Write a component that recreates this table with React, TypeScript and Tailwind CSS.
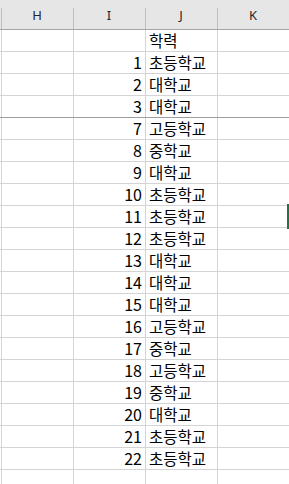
import React from "react";

type Row = { n: number | null; v: string; heavy?: boolean; sel?: boolean };

const rows: Row[] = [
  { n: null, v: "학력" },
  { n: 1, v: "초등학교" },
  { n: 2, v: "대학교" },
  { n: 3, v: "대학교", heavy: true },
  { n: 7, v: "고등학교" },
  { n: 8, v: "중학교" },
  { n: 9, v: "대학교" },
  { n: 10, v: "초등학교" },
  { n: 11, v: "초등학교", sel: true },
  { n: 12, v: "초등학교" },
  { n: 13, v: "대학교" },
  { n: 14, v: "대학교" },
  { n: 15, v: "대학교" },
  { n: 16, v: "고등학교" },
  { n: 17, v: "중학교" },
  { n: 18, v: "고등학교" },
  { n: 19, v: "중학교" },
  { n: 20, v: "대학교" },
  { n: 21, v: "초등학교" },
  { n: 22, v: "초등학교" },
  { n: null, v: "" },
];

const cellFont = {
  fontFamily: '"Noto Sans CJK KR", "Noto Sans", sans-serif',
};

export default function App() {
  return (
    <div className="w-[289px] h-[484px] overflow-hidden bg-white select-none">
      {/* column header strip */}
      <div className="flex h-[30px] bg-[#e6e6e6] border-b border-[#a6a6a6]">
        <div className="w-px" />
        {["H", "I", "J", "K"].map((c) => (
          <div key={c} className="relative w-[72px] flex items-start justify-center pt-[7px]">
            <div className="absolute left-0 top-[8px] bottom-0 w-px bg-[#bdbdbd]" />
            <span className="text-[13px] leading-[16px] text-[#262626]" style={{ fontFamily: '"Noto Sans", sans-serif' }}>
              {c}
            </span>
          </div>
        ))}
      </div>

      {/* body rows */}
      {rows.map((r, i) => (
        <div
          key={i}
          className={`flex h-[22px] border-b ${r.heavy ? "border-[#9e9e9e]" : "border-[#d4d4d4]"}`}
        >
          <div className="w-px" />
          <div className="w-[72px] border-l border-[#d4d4d4]" />
          <div
            className="w-[72px] border-l border-[#d4d4d4] flex items-center justify-end pr-[3px] text-[16px] leading-[21px] text-black"
            style={cellFont}
          >
            {r.n ?? ""}
          </div>
          <div
            className="w-[72px] border-l border-[#d4d4d4] flex items-center pl-[3px] text-[15.5px] leading-[21px] text-black whitespace-nowrap"
            style={cellFont}
          >
            {r.v}
          </div>
          <div className="relative w-[72px] border-l border-[#d4d4d4]">
            {r.sel && (
              <div className="absolute right-0 top-[-2px] w-[2px] h-[25px] bg-[#217346]" />
            )}
          </div>
        </div>
      ))}
    </div>
  );
}
